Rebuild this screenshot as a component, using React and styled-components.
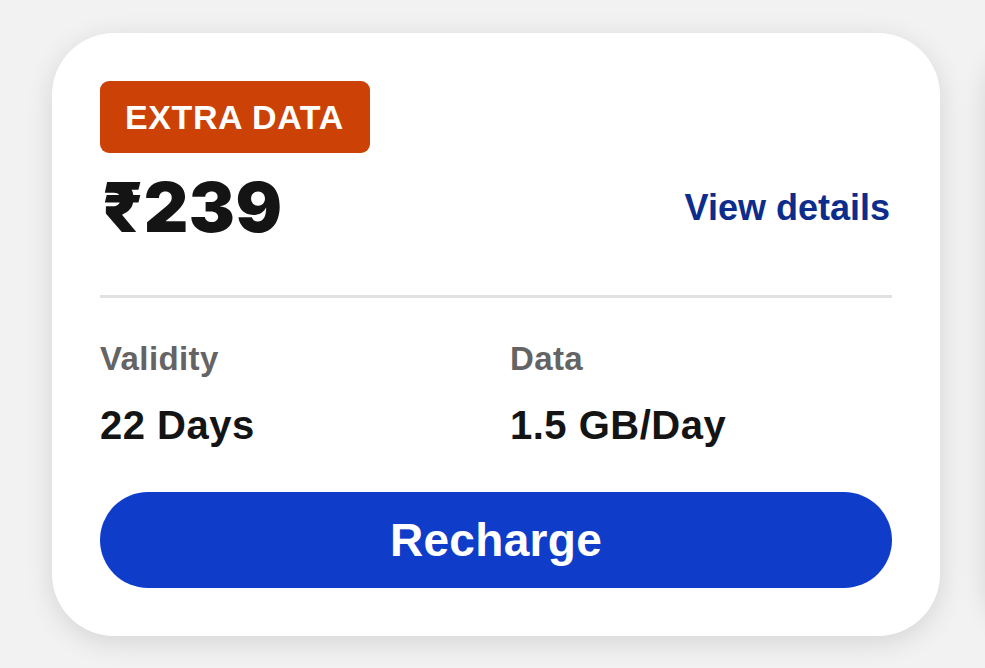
import React from "react";
import styled, { createGlobalStyle } from "styled-components";

const GlobalStyle = createGlobalStyle`
  html, body {
    margin: 0;
    padding: 0;
    background: #f2f2f2;
  }
  body {
    font-family: "Liberation Sans", Arial, sans-serif;
  }
`;

const Carousel = styled.div`
  display: flex;
  gap: 46px;
  padding: 33px 0 32px 52px;
  overflow: hidden;
  width: 985px;
  height: 668px;
  box-sizing: border-box;
`;

const Card = styled.div`
  flex: 0 0 888px;
  box-sizing: border-box;
  padding: 48px;
  background: #ffffff;
  border-radius: 62px;
  box-shadow: 0 6px 28px rgba(0, 0, 0, 0.12);
  display: flex;
  flex-direction: column;
  align-self: flex-start;
`;

// next card in the carousel, only its shadow peeks in at the right edge
const PeekCard = styled(Card)`
  height: 603px;
`;

const Badge = styled.span`
  align-self: flex-start;
  display: inline-flex;
  align-items: center;
  height: 72px;
  padding: 0 26px 0 25px;
  box-sizing: border-box;
  background: #cc4105;
  border-radius: 9px;
  color: #ffffff;
  font-size: 34px;
  font-weight: 700;
  letter-spacing: 0.6px;
  line-height: 1;
`;

const PriceRow = styled.div`
  margin-top: 20px;
  display: flex;
  align-items: center;
  justify-content: space-between;
`;

const Price = styled.div`
  font-family: Inter, "Liberation Sans", sans-serif;
  font-size: 69px;
  font-weight: 900;
  line-height: 1;
  letter-spacing: 0.5px;
  color: #141414;
  margin-left: 2px;
`;

const DetailsLink = styled.a`
  font-size: 36px;
  font-weight: 700;
  line-height: 1;
  color: #0c2d8c;
  text-decoration: none;
  cursor: pointer;
  margin-right: 2px;
`;

const Divider = styled.hr`
  margin: 53px 0 0;
  border: 0;
  height: 3px;
  background: #e1e1e1;
`;

const Specs = styled.div`
  margin-top: 44px;
  display: grid;
  grid-template-columns: 1fr 1fr;
  column-gap: 28px;
`;

const Spec = styled.div`
  display: flex;
  flex-direction: column;
  gap: 30px;
`;

const Label = styled.div`
  font-size: 33px;
  font-weight: 700;
  line-height: 1;
  letter-spacing: 0.4px;
  color: #646464;
`;

const Value = styled.div`
  font-size: 40px;
  font-weight: 700;
  line-height: 1;
  letter-spacing: 0.5px;
  color: #141414;
`;

const RechargeButton = styled.button`
  margin-top: 47px;
  height: 96px;
  width: 100%;
  border: 0;
  border-radius: 48px;
  background: #0f3cc9;
  color: #ffffff;
  font-family: "Liberation Sans", Arial, sans-serif;
  font-size: 46px;
  font-weight: 700;
  letter-spacing: 0.3px;
  cursor: pointer;
`;

const plan = {
  tag: "EXTRA DATA",
  price: "₹239",
  specs: [
    { label: "Validity", value: "22 Days" },
    { label: "Data", value: "1.5 GB/Day" },
  ],
};

function PlanCard({ data }) {
  return (
    <Card>
      <Badge>{data.tag}</Badge>
      <PriceRow>
        <Price>{data.price}</Price>
        <DetailsLink>View details</DetailsLink>
      </PriceRow>
      <Divider />
      <Specs>
        {data.specs.map((s) => (
          <Spec key={s.label}>
            <Label>{s.label}</Label>
            <Value>{s.value}</Value>
          </Spec>
        ))}
      </Specs>
      <RechargeButton>Recharge</RechargeButton>
    </Card>
  );
}

export default function App() {
  return (
    <>
      <GlobalStyle />
      <Carousel>
        <PlanCard data={plan} />
        <PeekCard />
      </Carousel>
    </>
  );
}
